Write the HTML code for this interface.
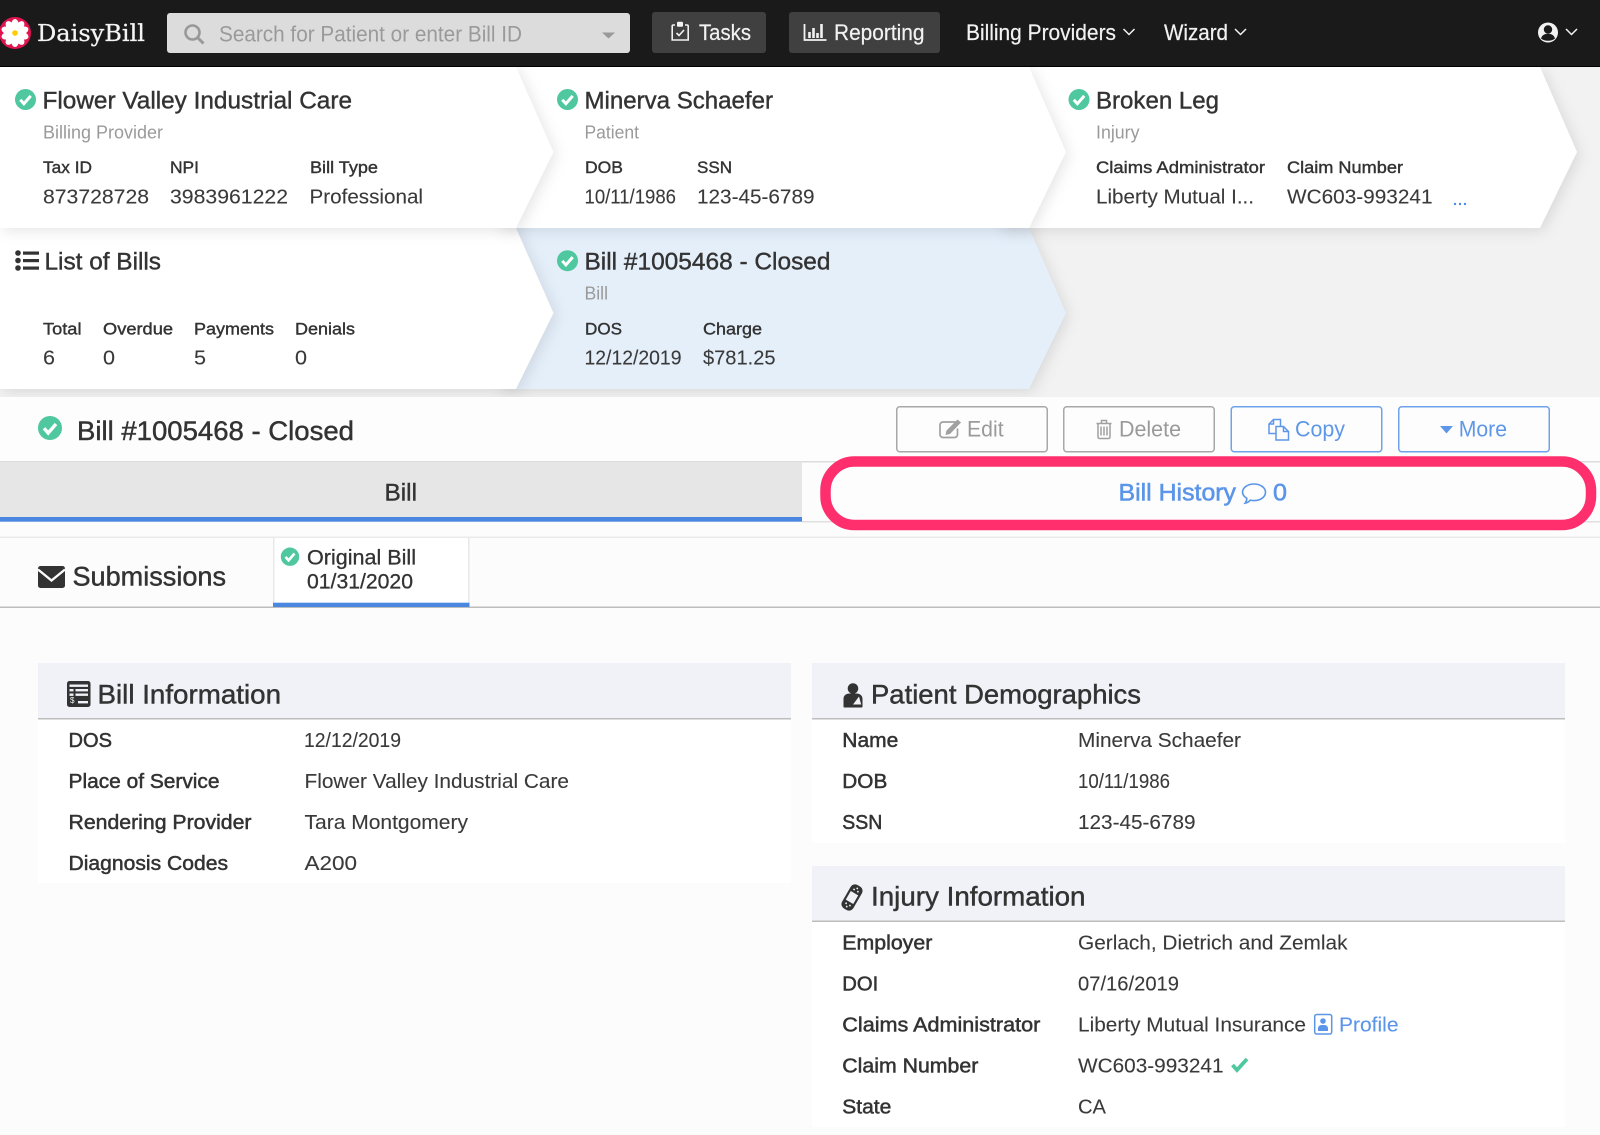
<!DOCTYPE html>
<html lang="en"><head><meta charset="utf-8"><title>DaisyBill - Bill #1005468</title>
<style>
html,body{margin:0;padding:0;background:#fcfcfc;width:1600px;height:1135px;overflow:hidden}
svg{display:block}
text{font-family:"Liberation Sans",sans-serif;fill:#333}
.t{font-size:24px;stroke:#333;stroke-width:.4px}
.s{font-size:18px;fill:#9a9a9a}
.l{font-size:17px;stroke:#333;stroke-width:.4px}
.v{font-size:20px;fill:#3a3a3a;stroke:#3a3a3a;stroke-width:.1px}
.h{font-size:27px;stroke:#333;stroke-width:.45px}
.r{font-size:20px;stroke:#333;stroke-width:.5px}
.n{font-size:22px;fill:#f2f2f2;stroke:#f2f2f2;stroke-width:.2px}
.b{font-size:22px}
.c{filter:drop-shadow(3px 3px 7px rgba(0,0,0,.10))}
</style></head><body>
<svg xmlns="http://www.w3.org/2000/svg" width="1600" height="1135" viewBox="0 0 1600 1135">
<defs>
<g id="ck"><circle r="10.500" fill="#4fc79f"/><path d="M-5.200 .2L-1.600 4.200 5.200-3.600" fill="none" stroke="#fff" stroke-width="3"/></g>
</defs>
<rect width="1600" height="1135" fill="#fcfcfc"/>
<rect y="67" width="1600" height="330" fill="#f2f2f2"/>

<!-- breadcrumb cards -->
<polygon class="c" points="500,228 1029,228 1066,313 1029,389 500,389" fill="#e5effa"/>
<polygon class="c" points="0,228 516,228 553.500,313 516,389 0,389" fill="#fff"/>
<polygon class="c" points="1000,67 1540,67 1577,152 1540,228 1000,228" fill="#fff"/>
<polygon class="c" points="500,67 1029,67 1066,152 1029,228 500,228" fill="#fff"/>
<polygon class="c" points="0,67 516,67 553.500,152 516,228 0,228" fill="#fff"/>

<!-- nav -->
<rect width="1600" height="66" fill="#1a1a1a"/>
<rect y="66" width="1600" height="1" fill="#000"/>
<circle cx="15" cy="33" r="16" fill="#e0144f"/>
<g fill="#fff" transform="translate(15 33)">
<ellipse cy="-8" rx="3.800" ry="6" /><ellipse cy="-8" rx="3.800" ry="6" transform="rotate(36)"/><ellipse cy="-8" rx="3.800" ry="6" transform="rotate(72)"/><ellipse cy="-8" rx="3.800" ry="6" transform="rotate(108)"/><ellipse cy="-8" rx="3.800" ry="6" transform="rotate(144)"/><ellipse cy="-8" rx="3.800" ry="6" transform="rotate(180)"/><ellipse cy="-8" rx="3.800" ry="6" transform="rotate(216)"/><ellipse cy="-8" rx="3.800" ry="6" transform="rotate(252)"/><ellipse cy="-8" rx="3.800" ry="6" transform="rotate(288)"/><ellipse cy="-8" rx="3.800" ry="6" transform="rotate(324)"/>
<circle r="2.800" fill="#fc0"/></g>
<text x="37" y="41" textLength="108" lengthAdjust="spacingAndGlyphs" style="font-family:'DejaVu Serif',serif;font-size:23px;fill:#f4f4f4;stroke:#f4f4f4;stroke-width:.25px">DaisyBill</text>

<rect x="167" y="13" width="463" height="40" rx="3" fill="#dcdcdc"/>
<circle cx="192.500" cy="32.500" r="7" fill="none" stroke="#999" stroke-width="2.600"/><path d="M197.500 37.500L203.500 43.500" stroke="#999" stroke-width="3"/>
<text x="219" y="41.500" textLength="303" lengthAdjust="spacingAndGlyphs" style="font-size:22px;fill:#9a9a9a">Search for Patient or enter Bill ID</text>
<polygon points="602,32.500 615,32.500 608.500,38.500" fill="#999"/>

<rect x="652" y="12" width="114" height="41" rx="3" fill="#404040"/>
<path d="M675 25h-1.800a1 1 0 0 0-1 1v14h16V26a1 1 0 0 0-1-1H685" fill="none" stroke="#f2f2f2" stroke-width="1.600"/><rect x="677" y="21.700" width="6" height="5" rx="1" fill="#f2f2f2"/><path d="M676.500 33l2.500 2.500 5-5.500" fill="none" stroke="#f2f2f2" stroke-width="1.600"/>
<text class="n" x="699" y="40" textLength="52" lengthAdjust="spacingAndGlyphs">Tasks</text>

<rect x="789" y="12" width="151" height="41" rx="3" fill="#404040"/>
<path d="M804.500 24v16h22" fill="none" stroke="#f2f2f2" stroke-width="1.800"/><path d="M809.500 32v6M813.500 28v10M817.500 33v5M821.500 24v14" stroke="#f2f2f2" stroke-width="2.600"/>
<text class="n" x="834" y="40" textLength="90.500" lengthAdjust="spacingAndGlyphs">Reporting</text>

<text class="n" x="966" y="40" textLength="150" lengthAdjust="spacingAndGlyphs">Billing Providers</text>
<path d="M1123.500 29l5.500 5.500 5.500-5.500" fill="none" stroke="#f2f2f2" stroke-width="1.500"/>
<text class="n" x="1164" y="40" textLength="64" lengthAdjust="spacingAndGlyphs">Wizard</text>
<path d="M1235 29l5.500 5.500 5.500-5.500" fill="none" stroke="#f2f2f2" stroke-width="1.500"/>
<circle cx="1548" cy="32.500" r="10" fill="#f2f2f2"/><circle cx="1548" cy="29.500" r="4.200" fill="#1a1a1a"/><path d="M1541 38.500c1-3.500 3.500-4.800 7-4.800s6 1.300 7 4.800c-3.500 3-10.500 3-14 0z" fill="#1a1a1a"/>
<path d="M1566 29l5.500 5.500 5.500-5.500" fill="none" stroke="#f2f2f2" stroke-width="1.500"/>

<!-- card 1 -->
<use href="#ck" x="25.500" y="99.500"/>
<text class="t" x="42.500" y="108.300" textLength="309.500" lengthAdjust="spacingAndGlyphs">Flower Valley Industrial Care</text>
<text class="s" x="43" y="138.500" textLength="120" lengthAdjust="spacingAndGlyphs">Billing Provider</text>
<text class="l" x="43" y="173" textLength="49" lengthAdjust="spacingAndGlyphs">Tax ID</text>
<text class="l" x="170" y="173" textLength="29" lengthAdjust="spacingAndGlyphs">NPI</text>
<text class="l" x="310" y="173" textLength="68" lengthAdjust="spacingAndGlyphs">Bill Type</text>
<text class="v" x="43" y="203.500" textLength="106" lengthAdjust="spacingAndGlyphs">873728728</text>
<text class="v" x="170" y="203.500" textLength="118" lengthAdjust="spacingAndGlyphs">3983961222</text>
<text class="v" x="309.500" y="203.500" textLength="113.500" lengthAdjust="spacingAndGlyphs">Professional</text>

<!-- card 2 -->
<use href="#ck" x="567.500" y="99.500"/>
<text class="t" x="584.500" y="108.300" textLength="188.500" lengthAdjust="spacingAndGlyphs">Minerva Schaefer</text>
<text class="s" x="584.500" y="138.500" textLength="54.500" lengthAdjust="spacingAndGlyphs">Patient</text>
<text class="l" x="585" y="173" textLength="38" lengthAdjust="spacingAndGlyphs">DOB</text>
<text class="l" x="697" y="173" textLength="35" lengthAdjust="spacingAndGlyphs">SSN</text>
<text class="v" x="584.500" y="203.500" textLength="91.500" lengthAdjust="spacingAndGlyphs">10/11/1986</text>
<text class="v" x="697" y="203.500" textLength="117.500" lengthAdjust="spacingAndGlyphs">123-45-6789</text>

<!-- card 3 -->
<use href="#ck" x="1079" y="99.500"/>
<text class="t" x="1096" y="108.300" textLength="123" lengthAdjust="spacingAndGlyphs">Broken Leg</text>
<text class="s" x="1096" y="138.500" textLength="43.500" lengthAdjust="spacingAndGlyphs">Injury</text>
<text class="l" x="1096" y="173" textLength="169" lengthAdjust="spacingAndGlyphs">Claims Administrator</text>
<text class="l" x="1287" y="173" textLength="116" lengthAdjust="spacingAndGlyphs">Claim Number</text>
<text class="v" x="1096" y="203.500" textLength="158" lengthAdjust="spacingAndGlyphs">Liberty Mutual I...</text>
<text class="v" x="1287" y="203.500" textLength="145.500" lengthAdjust="spacingAndGlyphs">WC603-993241</text>
<g fill="#4a8ae8"><circle cx="1455" cy="204" r="1.200"/><circle cx="1460" cy="204" r="1.200"/><circle cx="1465" cy="204" r="1.200"/></g>

<!-- card 4 -->
<g fill="#333"><circle cx="18" cy="253" r="2.800"/><circle cx="18" cy="260.500" r="2.800"/><circle cx="18" cy="268" r="2.800"/><rect x="23" y="251.500" width="16" height="3.200"/><rect x="23" y="259" width="16" height="3.200"/><rect x="23" y="266.500" width="16" height="3.200"/></g>
<text class="t" x="44.500" y="269.300" textLength="116.500" lengthAdjust="spacingAndGlyphs">List of Bills</text>
<text class="l" x="43" y="334.300" textLength="38.500" lengthAdjust="spacingAndGlyphs">Total</text>
<text class="l" x="103" y="334.300" textLength="70" lengthAdjust="spacingAndGlyphs">Overdue</text>
<text class="l" x="194" y="334.300" textLength="80" lengthAdjust="spacingAndGlyphs">Payments</text>
<text class="l" x="295" y="334.300" textLength="60" lengthAdjust="spacingAndGlyphs">Denials</text>
<text class="v" x="43" y="364.500" textLength="12" lengthAdjust="spacingAndGlyphs">6</text>
<text class="v" x="103" y="364.500" textLength="12" lengthAdjust="spacingAndGlyphs">0</text>
<text class="v" x="194" y="364.500" textLength="12" lengthAdjust="spacingAndGlyphs">5</text>
<text class="v" x="295" y="364.500" textLength="12" lengthAdjust="spacingAndGlyphs">0</text>

<!-- card 5 -->
<use href="#ck" x="567.500" y="260.700"/>
<text class="t" x="584.500" y="269.300" textLength="246" lengthAdjust="spacingAndGlyphs">Bill #1005468 - Closed</text>
<text class="s" x="584.500" y="299.500" textLength="23.500" lengthAdjust="spacingAndGlyphs">Bill</text>
<text class="l" x="585" y="334.300" textLength="37" lengthAdjust="spacingAndGlyphs">DOS</text>
<text class="l" x="703" y="334.300" textLength="59" lengthAdjust="spacingAndGlyphs">Charge</text>
<text class="v" x="584.500" y="364.500" textLength="97" lengthAdjust="spacingAndGlyphs">12/12/2019</text>
<text class="v" x="703" y="364.500" textLength="72.500" lengthAdjust="spacingAndGlyphs">$781.25</text>

<!-- bill title row -->
<rect y="397" width="1600" height="64" fill="#fdfdfd"/>
<g transform="translate(50 428)"><circle r="12" fill="#4fc79f"/><path d="M-6 .2L-1.800 5 6-4" fill="none" stroke="#fff" stroke-width="3.400"/></g>
<text class="h" x="77" y="439.800" textLength="277" lengthAdjust="spacingAndGlyphs">Bill #1005468 - Closed</text>

<g fill="#fdfdfd" stroke="#a8a8a8" stroke-width="1.500">
<rect x="896.750" y="406.750" width="150.500" height="45" rx="3"/>
<rect x="1063.750" y="406.750" width="150.500" height="45" rx="3"/>
</g>
<g fill="#fdfdfd" stroke="#6ea2ea" stroke-width="1.500">
<rect x="1231.250" y="406.750" width="150.500" height="45" rx="3"/>
<rect x="1398.750" y="406.750" width="150.500" height="45" rx="3"/>
</g>
<path d="M955.500 422h-12.500a3 3 0 0 0-3 3v9.500a3 3 0 0 0 3 3h11.500a3 3 0 0 0 3-3v-6" fill="none" stroke="#a0a0a0" stroke-width="1.700"/><path d="M946.500 430.500l-1 4.500 4.500-1 11-11.500-3.500-3z" fill="#a0a0a0"/>
<text class="b" x="967" y="436.700" textLength="36.600" lengthAdjust="spacingAndGlyphs" style="fill:#9a9a9a">Edit</text>
<path d="M1096.500 423.500h15M1101.500 423.500v-3h5v3M1098 423.500v13.500a1.500 1.500 0 0 0 1.500 1.500h9a1.500 1.500 0 0 0 1.500-1.500v-13.500M1101 426.500v9M1104 426.500v9M1107 426.500v9" fill="none" stroke="#a0a0a0" stroke-width="1.500"/>
<text class="b" x="1119" y="436.700" textLength="62" lengthAdjust="spacingAndGlyphs" style="fill:#9a9a9a">Delete</text>
<path d="M1275.500 433.500h-6.500v-9.500l4.500-4.500h7v6.500M1273.500 419.500v4.500h-4.500" fill="none" stroke="#5f97e8" stroke-width="1.500"/><path d="M1276 426.500h7.500l5 5v8.500h-12.500zM1283.500 426.500v5h5" fill="none" stroke="#5f97e8" stroke-width="1.500"/>
<text class="b" x="1295" y="436.700" textLength="50" lengthAdjust="spacingAndGlyphs" style="fill:#5f97e8">Copy</text>
<polygon points="1440,426 1453,426 1446.500,433.500" fill="#5f97e8"/>
<text class="b" x="1458.700" y="436.700" textLength="48.300" lengthAdjust="spacingAndGlyphs" style="fill:#5f97e8">More</text>

<!-- main tabs -->
<rect y="461" width="1600" height="1.500" fill="#dcdcdc"/>
<rect y="462" width="802" height="55" fill="#e6e6e6"/>
<rect y="517" width="802" height="4.700" fill="#4a87e0"/>
<rect x="802" y="521" width="798" height="1.500" fill="#e0e0e0"/>
<text x="384.500" y="500.600" textLength="32.500" lengthAdjust="spacingAndGlyphs" style="font-size:24px;stroke:#333;stroke-width:.4px">Bill</text>
<rect x="825.500" y="461.500" width="765.500" height="63.500" rx="29" fill="#fdfdfd" stroke="#ff2e6c" stroke-width="10.500"/>
<text x="1118.500" y="500.600" textLength="117.500" lengthAdjust="spacingAndGlyphs" style="font-size:24px;fill:#5b95e9;stroke:#5b95e9;stroke-width:.55px">Bill History</text>
<path d="M1254 484c6.600 0 11.500 3.700 11.500 8.300s-4.900 8.300-11.500 8.300c-1.300 0-2.600-.2-3.800-.5-1.300 1.700-3 2.700-5 3 1-1.200 1.600-3 1.600-4.800-2.500-1.500-4.300-3.500-4.300-6 0-4.600 5-8.300 11.500-8.300z" fill="none" stroke="#5b95e9" stroke-width="1.600"/>
<text x="1273" y="500.600" textLength="14" lengthAdjust="spacingAndGlyphs" style="font-size:24px;fill:#5b95e9;stroke:#5b95e9;stroke-width:.55px">0</text>

<!-- submissions -->
<rect y="536.500" width="1600" height="1.500" fill="#eaeaea"/>
<rect y="606.500" width="1600" height="1.500" fill="#bdbdbd"/>
<rect x="273" y="538" width="196.500" height="69" fill="#fff"/>
<rect x="273" y="538" width="1.500" height="65" fill="#e8e8e8"/><rect x="468" y="538" width="1.500" height="65" fill="#e8e8e8"/>
<rect x="273" y="602.700" width="196.500" height="4.300" fill="#4a87e0"/>
<rect x="38" y="566" width="27" height="22" rx="2.500" fill="#333"/>
<path d="M38 569.500l13.500 11 13.500-11" fill="none" stroke="#fcfcfc" stroke-width="2.400"/>
<text class="h" x="72.500" y="585.700" textLength="153.500" lengthAdjust="spacingAndGlyphs">Submissions</text>
<g transform="translate(290 556.700)"><circle r="9.200" fill="#4fc79f"/><path d="M-4.500 .2L-1.400 3.700 4.500-3.200" fill="none" stroke="#fff" stroke-width="2.600"/></g>
<text x="307" y="564.500" textLength="109" lengthAdjust="spacingAndGlyphs" style="font-size:21px;stroke:#333;stroke-width:.3px">Original Bill</text>
<text x="307" y="588.500" textLength="106" lengthAdjust="spacingAndGlyphs" style="font-size:21px;stroke:#333;stroke-width:.3px">01/31/2020</text>

<!-- panel: bill information -->
<rect x="38" y="663" width="753" height="220" fill="#fff"/>
<rect x="38" y="663" width="753" height="55" fill="#f1f2f7"/>
<rect x="38" y="718" width="753" height="1.500" fill="#bdbdbd"/>
<rect x="67" y="681" width="23.500" height="26" rx="2.500" fill="#333"/>
<g fill="#f1f2f7"><rect x="69.500" y="684.500" width="18.500" height="2.400"/><rect x="69.500" y="689" width="4" height="2.400"/><rect x="75.500" y="689" width="12.500" height="2.400"/><rect x="69.500" y="693.500" width="4" height="2.400"/><rect x="75.500" y="693.500" width="12.500" height="2.400"/><rect x="78" y="701" width="10" height="2.400"/></g>
<text x="70" y="703" style="font-size:8px;fill:#f1f2f7">$</text>
<text class="h" x="97.500" y="703.300" textLength="183.500" lengthAdjust="spacingAndGlyphs">Bill Information</text>
<text class="r" x="68.500" y="747" textLength="43.500" lengthAdjust="spacingAndGlyphs">DOS</text>
<text class="v" x="304" y="747" textLength="97" lengthAdjust="spacingAndGlyphs">12/12/2019</text>
<text class="r" x="68.500" y="788" textLength="151" lengthAdjust="spacingAndGlyphs">Place of Service</text>
<text class="v" x="304.500" y="788" textLength="264.500" lengthAdjust="spacingAndGlyphs">Flower Valley Industrial Care</text>
<text class="r" x="68.500" y="829" textLength="183" lengthAdjust="spacingAndGlyphs">Rendering Provider</text>
<text class="v" x="304.500" y="829" textLength="163.500" lengthAdjust="spacingAndGlyphs">Tara Montgomery</text>
<text class="r" x="68.500" y="870" textLength="159.500" lengthAdjust="spacingAndGlyphs">Diagnosis Codes</text>
<text class="v" x="304.500" y="870" textLength="52.500" lengthAdjust="spacingAndGlyphs">A200</text>

<!-- panel: patient demographics -->
<rect x="812" y="663" width="753" height="180" fill="#fff"/>
<rect x="812" y="663" width="753" height="55" fill="#f1f2f7"/>
<rect x="812" y="718" width="753" height="1.500" fill="#bdbdbd"/>
<circle cx="853" cy="688.500" r="5.300" fill="#333"/>
<path d="M844 707.500a1.500 1.500 0 0 1-.5-1.500v-7c0-3.500 2.500-5.500 6-5.500h7c3.500 0 6 2 6 5.500v7a1.500 1.500 0 0 1-.5 1.500z" fill="#333"/>
<path d="M853 704.500l6-8 2.200 8z" fill="#f1f2f7"/>
<text class="h" x="871" y="703.300" textLength="270" lengthAdjust="spacingAndGlyphs">Patient Demographics</text>
<text class="r" x="842.300" y="747" textLength="56" lengthAdjust="spacingAndGlyphs">Name</text>
<text class="v" x="1078" y="747" textLength="163" lengthAdjust="spacingAndGlyphs">Minerva Schaefer</text>
<text class="r" x="842.300" y="788" textLength="45" lengthAdjust="spacingAndGlyphs">DOB</text>
<text class="v" x="1078" y="788" textLength="92" lengthAdjust="spacingAndGlyphs">10/11/1986</text>
<text class="r" x="842.300" y="829" textLength="40" lengthAdjust="spacingAndGlyphs">SSN</text>
<text class="v" x="1078" y="829" textLength="117.500" lengthAdjust="spacingAndGlyphs">123-45-6789</text>

<!-- panel: injury information -->
<rect x="812" y="866" width="753" height="261" fill="#fff"/>
<rect x="812" y="866" width="753" height="54.500" fill="#f1f2f7"/>
<rect x="812" y="920.500" width="753" height="1.500" fill="#bdbdbd"/>
<g transform="translate(852 897.500) rotate(30)"><rect x="-6.500" y="-13.500" width="13" height="27" rx="5" fill="#333"/><rect x="-4.300" y="-5" width="8.600" height="10" fill="#f1f2f7"/>
<g fill="#f1f2f7"><circle cx="-2.200" cy="-8" r=".9"/><circle cx="2.200" cy="-8" r=".9"/><circle cy="-10.500" r=".9"/><circle cx="-2.200" cy="8" r=".9"/><circle cx="2.200" cy="8" r=".9"/><circle cy="10.500" r=".9"/></g></g>
<text class="h" x="871" y="905.300" textLength="214.500" lengthAdjust="spacingAndGlyphs">Injury Information</text>
<text class="r" x="842.300" y="949.500" textLength="90" lengthAdjust="spacingAndGlyphs">Employer</text>
<text class="v" x="1078" y="949.500" textLength="269.500" lengthAdjust="spacingAndGlyphs">Gerlach, Dietrich and Zemlak</text>
<text class="r" x="842.300" y="990.500" textLength="36" lengthAdjust="spacingAndGlyphs">DOI</text>
<text class="v" x="1078" y="990.500" textLength="101" lengthAdjust="spacingAndGlyphs">07/16/2019</text>
<text class="r" x="842.300" y="1031.500" textLength="198" lengthAdjust="spacingAndGlyphs">Claims Administrator</text>
<text class="v" x="1078" y="1031.500" textLength="228" lengthAdjust="spacingAndGlyphs">Liberty Mutual Insurance</text>
<rect x="1314.700" y="1014.500" width="17" height="19.500" rx="2" fill="none" stroke="#5b95e9" stroke-width="1.500"/>
<circle cx="1323" cy="1021" r="2.800" fill="#5b95e9"/><path d="M1318 1031v-2.500c0-2 1.500-3.500 3.500-3.500h3c2 0 3.500 1.500 3.500 3.500v2.500z" fill="#5b95e9"/>
<text x="1339" y="1031.500" textLength="59.500" lengthAdjust="spacingAndGlyphs" style="font-size:20px;fill:#5b95e9;stroke:#5b95e9;stroke-width:.1px">Profile</text>
<text class="r" x="842.300" y="1072.500" textLength="136" lengthAdjust="spacingAndGlyphs">Claim Number</text>
<text class="v" x="1078" y="1072.500" textLength="145.500" lengthAdjust="spacingAndGlyphs">WC603-993241</text>
<path d="M1232.500 1065l4.500 5 10-11" fill="none" stroke="#4fc79f" stroke-width="3.800"/>
<text class="r" x="842.300" y="1113.500" textLength="49" lengthAdjust="spacingAndGlyphs">State</text>
<text class="v" x="1078" y="1113.500" textLength="28" lengthAdjust="spacingAndGlyphs">CA</text>
</svg>
</body></html>
